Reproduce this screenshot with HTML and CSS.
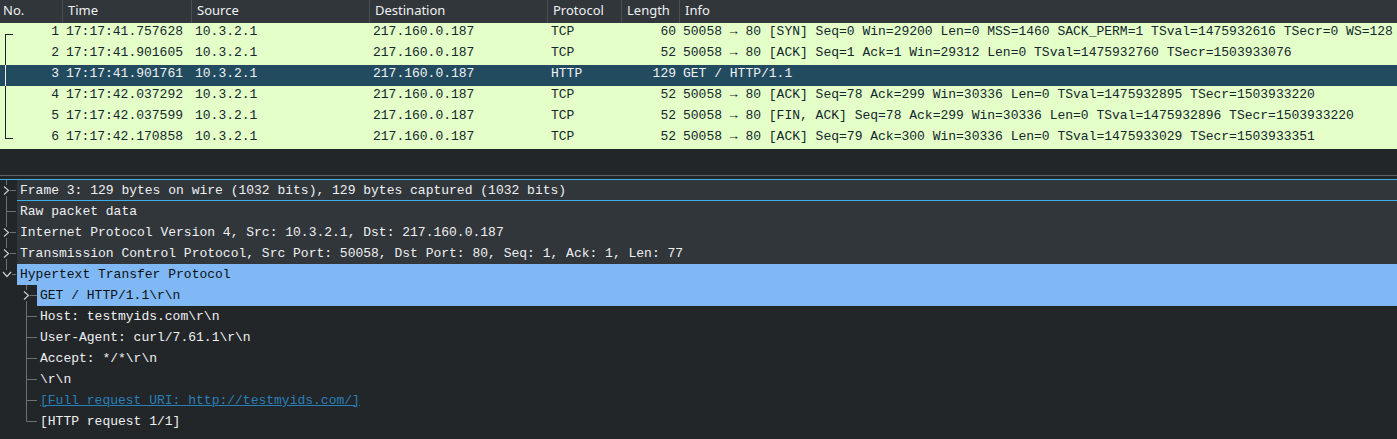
FILE: index.html
```html
<!DOCTYPE html>
<html>
<head>
<meta charset="utf-8">
<link rel="stylesheet" href="styles.css">
</head>
<body>
<div class="plist">
  <div class="cols phead">
    <div class="h">No.</div>
    <div class="h">Time</div>
    <div class="h">Source</div>
    <div class="h">Destination</div>
    <div class="h">Protocol</div>
    <div class="h">Length</div>
    <div class="h">Info</div>
  </div>
  <div class="cols prow">
    <div class="no r"><span class="rel first"></span>1</div>
    <div>17:17:41.757628</div><div>10.3.2.1</div><div>217.160.0.187</div><div>TCP</div><div class="r">60</div>
    <div>50058 → 80 [SYN] Seq=0 Win=29200 Len=0 MSS=1460 SACK_PERM=1 TSval=1475932616 TSecr=0 WS=128</div>
  </div>
  <div class="cols prow">
    <div class="no r"><span class="rel mid"></span>2</div>
    <div>17:17:41.901605</div><div>10.3.2.1</div><div>217.160.0.187</div><div>TCP</div><div class="r">52</div>
    <div>50058 → 80 [ACK] Seq=1 Ack=1 Win=29312 Len=0 TSval=1475932760 TSecr=1503933076</div>
  </div>
  <div class="cols prow sel">
    <div class="no r"><span class="rel mid"></span>3</div>
    <div>17:17:41.901761</div><div>10.3.2.1</div><div>217.160.0.187</div><div>HTTP</div><div class="r">129</div>
    <div>GET / HTTP/1.1</div>
  </div>
  <div class="cols prow">
    <div class="no r"><span class="rel mid"></span>4</div>
    <div>17:17:42.037292</div><div>10.3.2.1</div><div>217.160.0.187</div><div>TCP</div><div class="r">52</div>
    <div>50058 → 80 [ACK] Seq=78 Ack=299 Win=30336 Len=0 TSval=1475932895 TSecr=1503933220</div>
  </div>
  <div class="cols prow">
    <div class="no r"><span class="rel mid"></span>5</div>
    <div>17:17:42.037599</div><div>10.3.2.1</div><div>217.160.0.187</div><div>TCP</div><div class="r">52</div>
    <div>50058 → 80 [FIN, ACK] Seq=78 Ack=299 Win=30336 Len=0 TSval=1475932896 TSecr=1503933220</div>
  </div>
  <div class="cols prow">
    <div class="no r"><span class="rel last"></span>6</div>
    <div>17:17:42.170858</div><div>10.3.2.1</div><div>217.160.0.187</div><div>TCP</div><div class="r">52</div>
    <div>50058 → 80 [ACK] Seq=79 Ack=300 Win=30336 Len=0 TSval=1475933029 TSecr=1503933351</div>
  </div>
</div>
<div class="split"></div>
<div class="dpane">
  <div class="node top focus">
    <svg class="br" width="17" height="21"><path class="ln" d="M6.5 0V5M6.5 16V21M10 10.5H16"/><path class="chev" d="M4 6.5L8.5 10.5L4 14.5"/></svg>
    <div class="lbl">Frame 3: 129 bytes on wire (1032 bits), 129 bytes captured (1032 bits)</div>
  </div>
  <div class="node top">
    <svg class="br" width="17" height="21"><path class="ln" d="M6.5 0V21M7 10.5H16"/></svg>
    <div class="lbl">Raw packet data</div>
  </div>
  <div class="node top">
    <svg class="br" width="17" height="21"><path class="ln" d="M6.5 0V5M6.5 16V21M10 10.5H16"/><path class="chev" d="M4 6.5L8.5 10.5L4 14.5"/></svg>
    <div class="lbl">Internet Protocol Version 4, Src: 10.3.2.1, Dst: 217.160.0.187</div>
  </div>
  <div class="node top">
    <svg class="br" width="17" height="21"><path class="ln" d="M6.5 0V5M6.5 16V21M10 10.5H16"/><path class="chev" d="M4 6.5L8.5 10.5L4 14.5"/></svg>
    <div class="lbl">Transmission Control Protocol, Src Port: 50058, Dst Port: 80, Seq: 1, Ack: 1, Len: 77</div>
  </div>
  <div class="node hl">
    <svg class="br" width="17" height="21"><path class="ln" d="M6.5 0V6M12 10.5H16"/><path class="chev" d="M3 8L7 12.5L11 8"/></svg>
    <div class="lbl">Hypertext Transfer Protocol</div>
  </div>
  <div class="node child hl">
    <div class="ind"></div>
    <svg class="br2" width="20" height="21"><path class="ln" d="M9.5 0V5M9.5 16V21M13 10.5H20"/><path class="chev" d="M7 6.5L11.5 10.5L7 14.5"/></svg>
    <div class="lbl">GET / HTTP/1.1\r\n</div>
  </div>
  <div class="node child">
    <div class="ind"></div>
    <svg class="br2" width="20" height="21"><path class="ln" d="M9.5 0V21M10 10.5H20"/></svg>
    <div class="lbl">Host: testmyids.com\r\n</div>
  </div>
  <div class="node child">
    <div class="ind"></div>
    <svg class="br2" width="20" height="21"><path class="ln" d="M9.5 0V21M10 10.5H20"/></svg>
    <div class="lbl">User-Agent: curl/7.61.1\r\n</div>
  </div>
  <div class="node child">
    <div class="ind"></div>
    <svg class="br2" width="20" height="21"><path class="ln" d="M9.5 0V21M10 10.5H20"/></svg>
    <div class="lbl">Accept: */*\r\n</div>
  </div>
  <div class="node child">
    <div class="ind"></div>
    <svg class="br2" width="20" height="21"><path class="ln" d="M9.5 0V21M10 10.5H20"/></svg>
    <div class="lbl">\r\n</div>
  </div>
  <div class="node child">
    <div class="ind"></div>
    <svg class="br2" width="20" height="21"><path class="ln" d="M9.5 0V21M10 10.5H20"/></svg>
    <div class="lbl"><span class="lnk">[Full request URI: http://testmyids.com/]</span></div>
  </div>
  <div class="node child">
    <div class="ind"></div>
    <svg class="br2" width="20" height="21"><path class="ln" d="M9.5 0V10.5H20"/></svg>
    <div class="lbl">[HTTP request 1/1]</div>
  </div>
</div>
</body>
</html>
```
FILE: styles.css
```css
html, body {
  margin: 0;
  padding: 0;
}
body {
  width: 1397px;
  height: 439px;
  overflow: hidden;
  background: #232629;
  font-family: "Liberation Mono", monospace;
  font-size: 13px;
}
.plist {
  height: 175px;
  background: #232629;
}
.cols {
  display: grid;
  grid-template-columns: 62px 129px 178px 178px 74px 58px 1fr;
}
.phead {
  height: 23px;
  background: #31363b;
  color: #eff0f1;
  font-family: "Noto Sans", sans-serif;
  font-size: 13px;
  line-height: 20px;
}
.phead .h {
  padding-left: 5px;
  border-left: 1px solid #4a4f54;
  white-space: nowrap;
  overflow: hidden;
}
.phead .h:first-child {
  border-left: 0;
  padding-left: 3px;
}
.prow {
  height: 21px;
  line-height: 18px;
  background: #e4ffc7;
  color: #12272e;
  white-space: nowrap;
}
.prow > div {
  padding-left: 4px;
  overflow: hidden;
}
.prow > div.r {
  text-align: right;
  padding-left: 0;
  padding-right: 3px;
}
.prow.sel {
  background: #224b60;
  color: #eef2f3;
}
.no {
  position: relative;
}
.rel {
  position: absolute;
  left: 5px;
  width: 7px;
  border-left: 1px solid currentColor;
}
.rel.first {
  top: 11px;
  bottom: 0;
  border-top: 1px solid currentColor;
}
.rel.mid {
  top: 0;
  bottom: 0;
}
.rel.last {
  top: 0;
  height: 10px;
  border-bottom: 1px solid currentColor;
}
.split {
  height: 1px;
  background: #5e6266;
}
.dpane {
  margin-top: 3px;
  border-top: 1px solid #3daee9;
}
.node {
  display: flex;
  height: 21px;
  line-height: 21px;
  color: #eff0f1;
  white-space: nowrap;
}
.br {
  flex: none;
  display: block;
}
.br2 {
  flex: none;
  display: block;
}
.ind {
  flex: none;
  width: 17px;
}
.ln {
  stroke: #6b7075;
  stroke-width: 1;
  fill: none;
}
.chev {
  stroke: #c9cccf;
  stroke-width: 1.2;
  fill: none;
}
.lbl {
  flex: 1;
  padding-left: 3px;
  overflow: hidden;
}
.node.top .lbl {
  background: #31363b;
}
.node.focus .lbl {
  box-shadow: inset 0 -1px #3daee9;
}
.node.hl .lbl {
  background: #7fb8f5;
  color: #0d0f10;
}
.lnk {
  color: #2980b9;
  text-decoration: underline;
}
```
